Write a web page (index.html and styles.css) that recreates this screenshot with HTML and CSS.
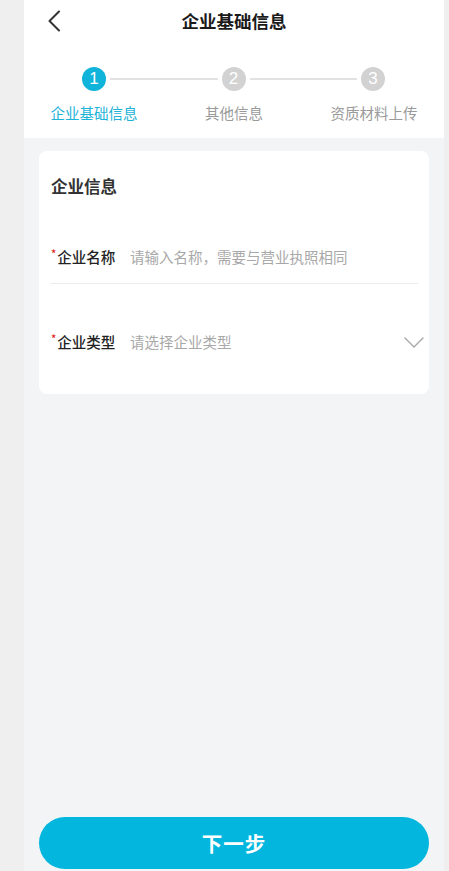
FILE: index.html
```html
<!DOCTYPE html>
<html lang="zh-CN">
<head>
<meta charset="utf-8">
<title>企业基础信息</title>
<link rel="stylesheet" href="styles.css">
</head>
<body>
<div class="app">
  <header class="header">
    <div class="nav">
      <svg class="back" width="14" height="22" viewBox="0 0 14 22"><path d="M12 1.5 L2.5 11 L12 20.5" fill="none" stroke="#333" stroke-width="2" stroke-linecap="round" stroke-linejoin="round"/></svg>
      <div class="nav-title">企业基础信息</div>
    </div>
    <div class="steps">
      <div class="dots">
        <span class="dot active">1</span>
        <span class="line"></span>
        <span class="dot">2</span>
        <span class="line"></span>
        <span class="dot">3</span>
      </div>
      <div class="labels">
        <span class="label active">企业基础信息</span>
        <span class="label">其他信息</span>
        <span class="label">资质材料上传</span>
      </div>
    </div>
  </header>
  <section class="card">
    <h2 class="card-title">企业信息</h2>
    <div class="row row-first">
      <div class="field-label"><span class="req">*</span>企业名称</div>
      <div class="placeholder">请输入名称，需要与营业执照相同</div>
    </div>
    <div class="row row-second">
      <div class="field-label"><span class="req">*</span>企业类型</div>
      <div class="placeholder">请选择企业类型</div>
      <svg class="chev" width="20" height="11" viewBox="0 0 20 11"><path d="M1 1 L10 10 L19 1" fill="none" stroke="#a6a6a6" stroke-width="1.4" stroke-linecap="round" stroke-linejoin="round"/></svg>
    </div>
  </section>
  <div class="spacer"></div>
  <button class="next">下一步</button>
</div>
</body>
</html>
```
FILE: styles.css
```css
* { box-sizing: border-box; margin: 0; padding: 0; }
html, body { height: 100%; }
body {
  background: #efefef;
  font-family: "Noto Sans CJK SC", "Noto Sans", sans-serif;
  color: #333;
}
.app {
  width: 420px;
  height: 871px;
  margin-left: 24px;
  background: #f3f4f6;
  display: flex;
  flex-direction: column;
}
.header {
  background: #fff;
  padding-bottom: 15px;
}
.nav {
  height: 42px;
  display: flex;
  align-items: center;
  justify-content: center;
  position: relative;
}
.back {
  position: absolute;
  left: 23px;
  top: 10px;
}
.nav-title {
  font-size: 17.5px;
  font-weight: 700;
  color: #1a1a1a;
  line-height: 24px;
}
.steps {
  padding-top: 25px;
}
.dots {
  display: flex;
  align-items: center;
  padding: 0 59px 0 58px;
  height: 24px;
}
.dot {
  width: 24px;
  height: 24px;
  border-radius: 50%;
  background: #d2d2d2;
  color: #fff;
  font-family: "Liberation Sans", Arial, sans-serif;
  font-size: 17px;
  line-height: 24px;
  text-align: center;
  flex: none;
}
.dot.active { background: #10b3da; }
.line {
  flex: 1;
  height: 2px;
  background: #e2e2e2;
  margin: 0 4px;
}
.labels {
  display: grid;
  grid-template-columns: repeat(3, 1fr);
  margin-top: 12px;
}
.label {
  text-align: center;
  font-size: 14.5px;
  line-height: 20px;
  color: #9a9a9a;
}
.label.active { color: #21b2d8; }
.card {
  margin: 13px 15px 0;
  background: #fff;
  border-radius: 8px;
  padding: 24px 11px 25px;
}
.card-title {
  font-size: 16.5px;
  font-weight: 700;
  line-height: 22px;
  color: #333;
  margin-left: 1px;
}
.row {
  display: flex;
  align-items: center;
  height: 54px;
}
.row-first {
  margin-top: 33px;
  border-bottom: 1px solid #ececec;
}
.row-second {
  margin-top: 31px;
  height: 54px;
}
.field-label {
  width: 80px;
  flex: none;
  font-size: 14.5px;
  font-weight: 500;
  color: #222;
  padding-left: 1px;
  display: flex;
  align-items: flex-start;
  line-height: 20px;
}
.req {
  color: #e02020;
  font-size: 11px;
  line-height: 12px;
  margin-right: 1px;
  margin-top: 0;
}
.placeholder {
  font-size: 14.5px;
  color: #a8a8a8;
  line-height: 20px;
  flex: 1;
}
.chev {
  flex: none;
  margin-right: -6px;
}
.spacer { flex: 1; }
.next {
  margin: 0 15px 2px;
  height: 52px;
  border: none;
  border-radius: 26px;
  background: #03b6de;
  color: #fff;
  font-family: "Noto Sans CJK SC", sans-serif;
  font-size: 20.5px;
  font-weight: 700;
  letter-spacing: 1px;
}
```
